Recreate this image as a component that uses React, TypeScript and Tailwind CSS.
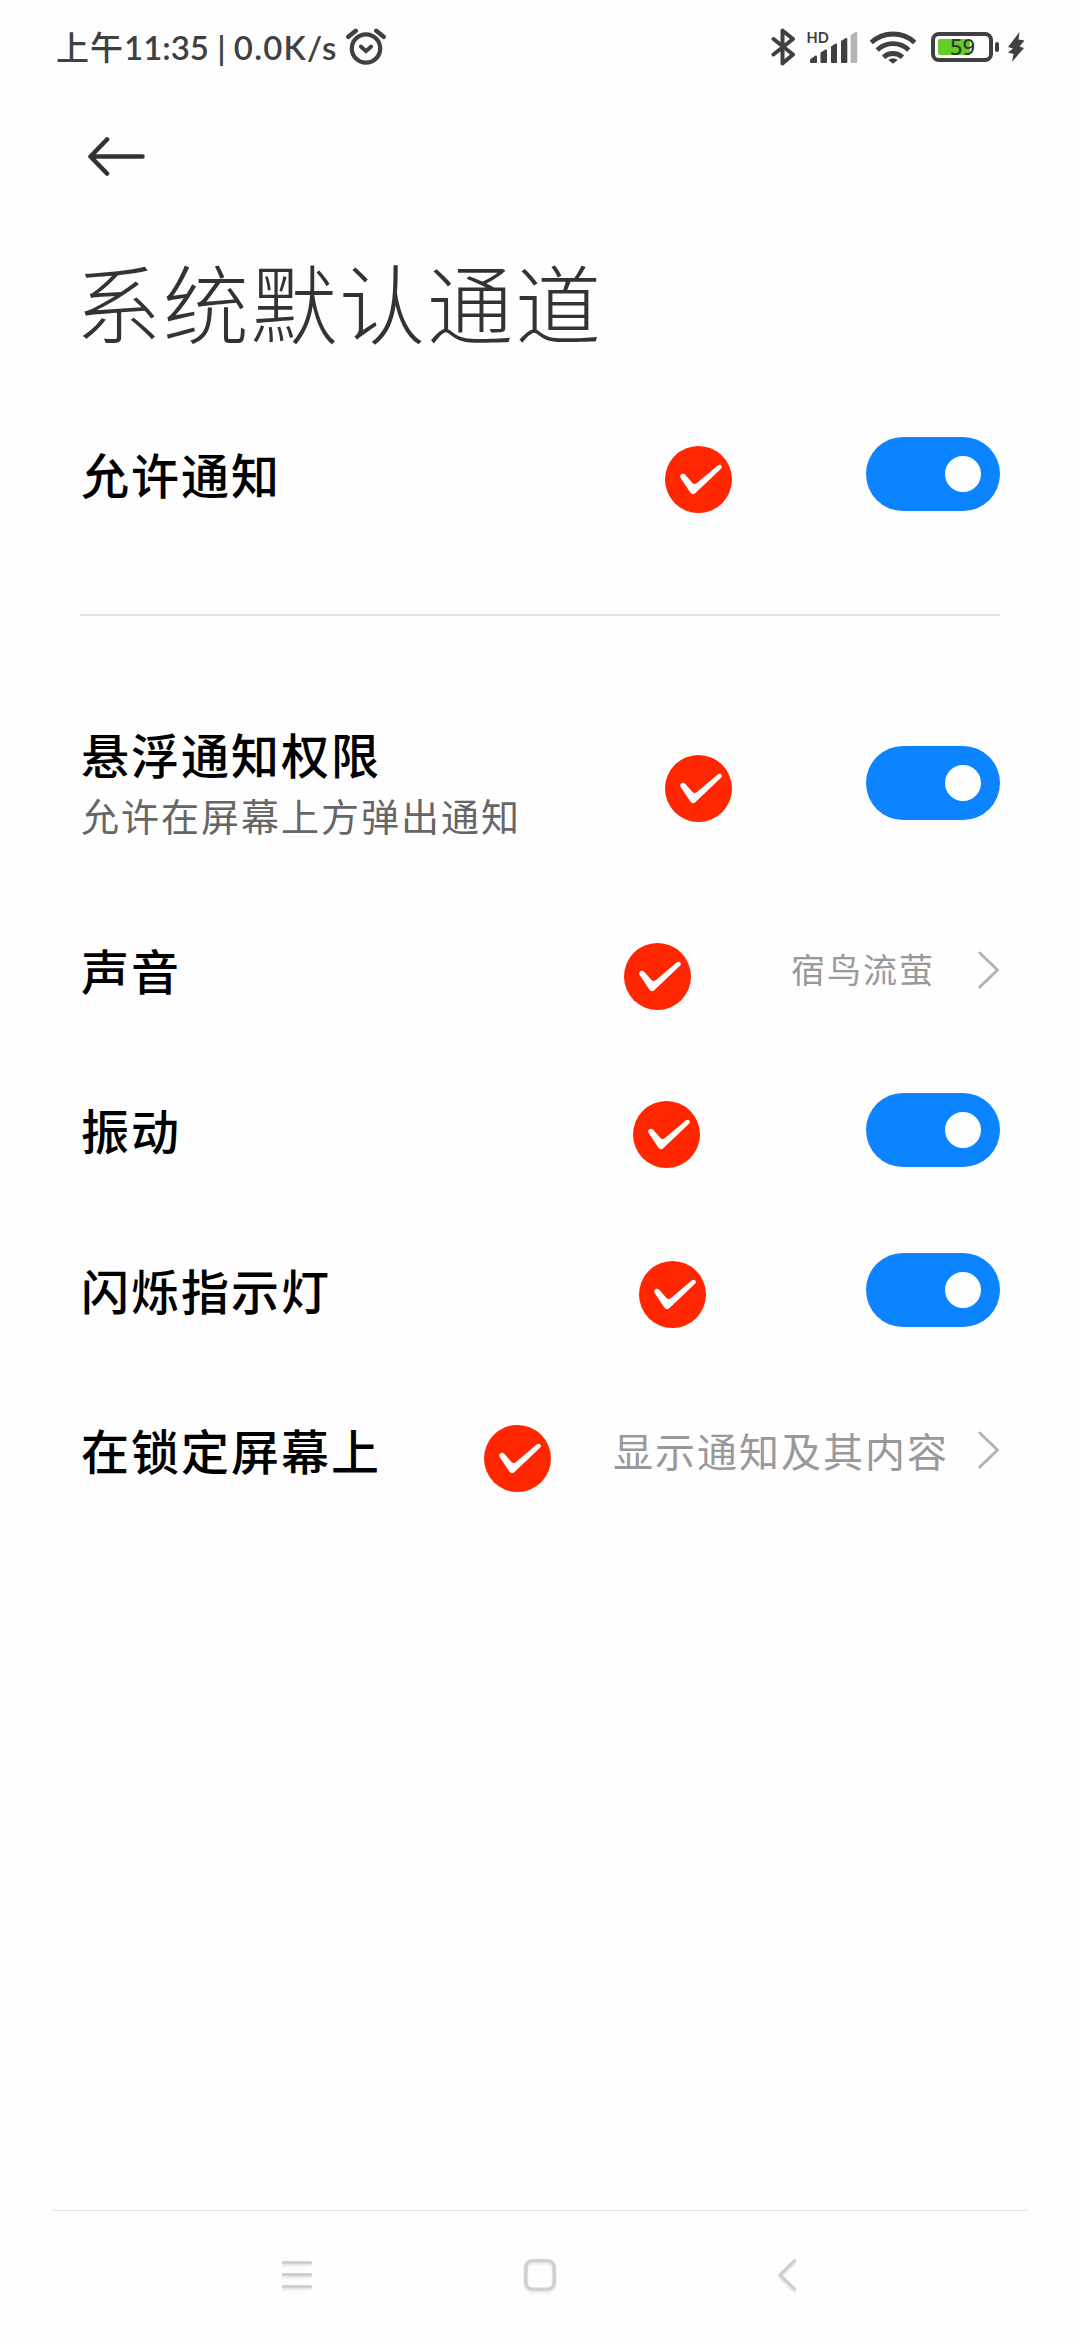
import React from 'react';

const INK = '#404040';

type RowItem = {
  label: string;
  hint?: string;
  value?: string;
  valueClass?: string;
  height: string;
  badgeClass: string;
};

const ROWS: RowItem[] = [
  { label: '悬浮通知权限', hint: '允许在屏幕上方弹出通知', height: 'h-[214px]', badgeClass: 'mt-[11px] mr-[134px]' },
  { label: '声音', value: '宿鸟流萤', valueClass: 'text-[34px] mr-[43px] pb-1', height: 'h-40', badgeClass: 'mt-[13px] mr-[100px]' },
  { label: '振动', height: 'h-40', badgeClass: 'mt-[9px] mr-[166px]' },
  { label: '闪烁指示灯', height: 'h-40', badgeClass: 'mt-[9px] mr-[160px]' },
  { label: '在锁定屏幕上', value: '显示通知及其内容', valueClass: 'text-[40px] mr-[29px]', height: 'h-40', badgeClass: 'mt-[17px] mr-[62px]' },
];

function AlarmIcon() {
  return (
    <svg className="h-[38px] w-10" viewBox="0 0 40 38" fill="none" stroke={INK} strokeWidth="4.200" strokeLinecap="round">
      <circle cx="20" cy="20.500" r="14.200" />
      <path d="M2.300 8.800 9.800 2.800M37.700 8.800 30.200 2.800" strokeWidth="4.400" />
      <path d="m14.800 18.500 5.200 4.700 5.200-4.700" strokeWidth="3.800" />
    </svg>
  );
}

function BluetoothIcon() {
  return (
    <svg className="h-10 w-[26px]" viewBox="0 0 26 40" fill="none" stroke={INK} strokeWidth="4" strokeLinejoin="round" strokeLinecap="round">
      <path d="M2.500 12 22 27.500 11.500 36.500V3.500L22 12 2.500 27.500" />
    </svg>
  );
}

function SignalIcon() {
  return (
    <svg className="h-[46px] w-[54px]" viewBox="-2 -6 54 46" fill={INK}>
      <text x="-0.500" y="12.500" fontSize="14.500" fontWeight="700" fontFamily="Lato, sans-serif">HD</text>
      <path d="M3.500 29 8.500 25.500q1.500-.5 1.500 1V32q0 1-1 1H4q-1 0-1-1v-2Z" />
      <path d="M13.500 22.500 18.500 19.500q1.500-.5 1.500 1V32q0 1-1 1h-4.500q-1 0-1-1Z" />
      <path d="M24 16.500 28.500 13.500q1.500-.5 1.500 1V32q0 1-1 1h-4q-1 0-1-1Z" />
      <path d="M34 11 38.800 8q1.500-.5 1.500 1V32q0 1-1 1H35q-1 0-1-1Z" />
      <path d="M43.700 5 48.700 2q1.500-.5 1.500 1V32q0 1-1 1h-4.500q-1 0-1-1Z" fill="#b4b4b4" />
    </svg>
  );
}

function WifiIcon() {
  return (
    <svg className="h-[34px] w-12" viewBox="0 0 48 34" fill="none" stroke={INK} strokeWidth="4.800">
      <path d="M2.300 12.500a32 32 0 0 1 43.400 0" />
      <path d="M8.200 20a23 23 0 0 1 31.600 0" />
      <path d="M14.500 27.200a14 14 0 0 1 19 0" />
      <path d="M19.300 30a7 7 0 0 1 9.400 0L24 33.800Z" fill={INK} stroke="none" />
    </svg>
  );
}

function BatteryIcon() {
  return (
    <svg className="h-[30px] w-[69px]" viewBox="0 0 69 30">
      <rect x="7" y="7" width="32" height="16" rx="2" fill="#66cc29" />
      <rect x="2" y="2" width="58" height="26" rx="6" fill="none" stroke={INK} strokeWidth="4" />
      <rect x="64" y="10" width="4" height="10" rx="2" fill={INK} />
      <text x="31.500" y="23" textAnchor="middle" fontSize="22" fill="#2e3d26" fontFamily="'Noto Sans', sans-serif">59</text>
    </svg>
  );
}

function BoltIcon() {
  return (
    <svg className="h-8 w-[18px]" viewBox="0 0 18 32" fill={INK}>
      <path d="M12.500 1 1 16l5 1.500L1 21.500l5.500 1.500L5 31 17 17l-4.500-1.500L17.500 9.500 11.500 8.500Z" />
    </svg>
  );
}

function StatusBar() {
  return (
    <div className="flex h-[94px] items-center pl-[56px] text-[33px] font-medium text-[#404040]">
      <span className="w-[290px] whitespace-nowrap">
        <span className="tracking-[1px]">上午</span>
        <span className="font-['Lato','Noto_Sans_CJK_SC',sans-serif] font-semibold">11:35 | </span>
        <span className="font-['Lato','Noto_Sans_CJK_SC',sans-serif] font-semibold tracking-[1.2px]">0.0K/s</span>
      </span>
      <AlarmIcon />
      <div className="ml-auto mr-[55px] flex items-center">
        <BluetoothIcon />
        <div className="ml-2"><SignalIcon /></div>
        <div className="ml-[10px]"><WifiIcon /></div>
        <div className="ml-[14px]"><BatteryIcon /></div>
        <div className="ml-[7px]"><BoltIcon /></div>
      </div>
    </div>
  );
}

function CheckBadge({ className }: { className: string }) {
  return (
    <svg className={`size-[67px] shrink-0 ${className}`} viewBox="0 0 67 67">
      <circle cx="33.500" cy="33.500" r="33.500" fill="#ff2600" />
      <path d="M15.500 31.800C14 29 17.800 26.300 20 28.500L27.500 37Q29.500 39.200 32 37L53 19.300C55.500 17.400 58.300 20.500 56 22.800L30.500 47Q28 49.500 25.500 46.800Z" fill="#fff" />
    </svg>
  );
}

function Toggle() {
  return (
    <button type="button" role="switch" aria-checked="true" className="flex h-[74px] w-[134px] shrink-0 items-center justify-end rounded-full bg-[#0d84ff] pr-[19px]">
      <span className="size-9 rounded-full bg-white" />
    </button>
  );
}

function Chevron() {
  return (
    <svg className="h-[38px] w-[22px] shrink-0" viewBox="0 0 22 38" fill="none" stroke="#b2b2b2" strokeWidth="3" strokeLinecap="round" strokeLinejoin="round">
      <path d="M1.800 2 19.500 19 1.800 36" />
    </svg>
  );
}

function Row({ item }: { item: RowItem }) {
  return (
    <div className={`flex items-center ${item.height}`}>
      <div className="mr-auto whitespace-nowrap pb-[3px] pl-px">
        <div className="text-[48px] font-medium leading-[64px] tracking-[2px] text-black">{item.label}</div>
        {item.hint && <div className="pt-0.5 text-[38px] leading-[56px] tracking-[2px] text-[#666666]">{item.hint}</div>}
      </div>
      <CheckBadge className={item.badgeClass} />
      {item.value ? (
        <>
          <span className={`whitespace-nowrap tracking-[2px] text-[#999999] ${item.valueClass}`}>{item.value}</span>
          <Chevron />
        </>
      ) : (
        <Toggle />
      )}
    </div>
  );
}

function NavBar() {
  return (
    <nav className="mx-[52px] flex h-[130px] border-t border-[#e3e3e3]">
      <svg className="ml-[228px] mt-[47px] h-9 w-[34px] drop-shadow-[0_2px_1px_rgba(0,0,0,0.08)]" viewBox="0 0 34 36" stroke="#cfcfcf" strokeWidth="3.300" strokeLinecap="round">
        <path d="M3.500 4.600h27M3.500 16.600h27M3.500 28.600h27" />
      </svg>
      <svg className="ml-[209px] mt-[47px] h-9 w-[34px] drop-shadow-[0_2px_1px_rgba(0,0,0,0.08)]" viewBox="0 0 34 36" fill="none" stroke="#cfcfcf" strokeWidth="3.600">
        <rect x="2.800" y="2.800" width="28.400" height="28.400" rx="6.500" />
      </svg>
      <svg className="ml-[219px] mt-[47px] h-9 w-[22px] drop-shadow-[0_2px_1px_rgba(0,0,0,0.08)]" viewBox="0 0 22 36" fill="none" stroke="#cfcfcf" strokeWidth="3.400" strokeLinecap="round" strokeLinejoin="round">
        <path d="M18.500 2.700 4 17l14.500 14.300" />
      </svg>
    </nav>
  );
}

export default function App() {
  return (
    <div className="flex h-[2340px] w-[1080px] flex-col bg-[#fefefe] font-['Noto_Sans_CJK_SC',sans-serif]">
      <StatusBar />
      <header className="h-[300px] pl-[75px]">
        <svg className="ml-3 mt-[42px] h-10 w-[58px]" viewBox="0 0 58 40" fill="none" stroke="#333" strokeWidth="4.600" strokeLinecap="round" strokeLinejoin="round">
          <path d="M55.500 20.500H4M20 3.500 3.500 20.500 20 37.500" />
        </svg>
        <h1 className="mt-[61px] text-[86px] font-light leading-[128px] tracking-[2px] text-[#333333]">系统默认通道</h1>
      </header>
      <main className="flex-1 px-20">
        <Row item={{ label: '允许通知', height: 'h-40', badgeClass: 'mt-[11px] mr-[134px]' }} />
        <hr className="mb-[60px] mt-[60px] border-t-2 border-[#e3e3e3]" />
        {ROWS.map((row) => (
          <Row key={row.label} item={row} />
        ))}
      </main>
      <NavBar />
    </div>
  );
}
